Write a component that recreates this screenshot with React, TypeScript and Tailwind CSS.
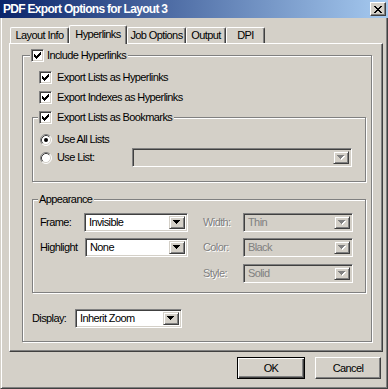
import React from "react";

const sunken =
  "border-t border-l border-t-[#808080] border-l-[#808080] border-b border-r border-b-white border-r-white shadow-[inset_1px_1px_0_#404040,inset_-1px_-1px_0_#d4d0c8]";
const raisedBtn =
  "border-t border-l border-t-white border-l-white border-b border-r border-b-[#404040] border-r-[#404040] shadow-[inset_-1px_-1px_0_#808080]";
const raisedArrow =
  "border-t border-l border-t-[#d4d0c8] border-l-[#d4d0c8] border-b border-r border-b-[#404040] border-r-[#404040] shadow-[inset_1px_1px_0_#fff,inset_-1px_-1px_0_#808080]";
const etched = "border border-[#808080] shadow-[inset_1px_1px_0_#fff,1px_1px_0_#fff]";

function Check() {
  return (
    <span className={`w-[13px] h-[13px] shrink-0 bg-white flex items-center justify-center ${sunken}`}>
      <svg width="7" height="7" viewBox="0 0 7 7" shapeRendering="crispEdges">
        <path
          d="M6 0h1v3h-1v1h-1v1h-1v1h-1v1h-1v-1h-1v-1h-1v-3h1v1h1v1h1v-1h1v-1h1z"
          fill="#000"
        />
      </svg>
    </span>
  );
}

function Radio({ on }: { on?: boolean }) {
  return (
    <svg width="12" height="12" viewBox="0 0 12 12" className="shrink-0">
      <circle cx="6" cy="6" r="5" fill="#fff" />
      <path d="M9.89 2.11 A5.5 5.5 0 0 0 2.11 9.89" stroke="#808080" fill="none" strokeWidth="1" />
      <path d="M2.11 9.89 A5.5 5.5 0 0 0 9.89 2.11" stroke="#fff" fill="none" strokeWidth="1" />
      <path d="M9.18 2.82 A4.5 4.5 0 0 0 2.82 9.18" stroke="#404040" fill="none" strokeWidth="1" />
      <path d="M2.82 9.18 A4.5 4.5 0 0 0 9.18 2.82" stroke="#d4d0c8" fill="none" strokeWidth="1" />
      {on && <circle cx="6" cy="6" r="2" fill="#000" />}
    </svg>
  );
}

function Arrow({ disabled }: { disabled?: boolean }) {
  const d = "M0 0H7V1H6V2H5V3H4V4H3V3H2V2H1V1H0Z";
  return (
    <span className={`w-[16px] h-full shrink-0 bg-[#d4d0c8] flex items-center justify-center ${raisedArrow}`}>
      <svg width="8" height="5" viewBox="0 0 8 5" shapeRendering="crispEdges">
        {disabled && <path d={d} fill="#fff" transform="translate(1,1)" />}
        <path d={d} fill={disabled ? "#808080" : "#000"} />
      </svg>
    </span>
  );
}

function Combo({ value, w, disabled }: { value: string; w: string; disabled?: boolean }) {
  return (
    <div className={`${w} h-[19px] shrink-0 flex p-[2px] ${sunken} ${disabled ? "bg-[#d4d0c8]" : "bg-white"}`}>
      <span className={`flex-1 pl-[2px] leading-[13px] ${disabled ? "text-[#808080]" : "text-black"}`}>{value}</span>
      <Arrow disabled={disabled} />
    </div>
  );
}

function Tab({ label, w, active }: { label: string; w: string; active?: boolean }) {
  return (
    <div
      className={`${w} shrink-0 flex items-center justify-center bg-[#d4d0c8] rounded-tl-[2px] rounded-tr-[2px] border-t border-l border-t-white border-l-white border-r border-r-[#404040] shadow-[inset_-1px_0_0_#808080] ${
        active ? "h-[19px] -mb-[1px] relative z-10 pb-[2px]" : "h-[16px]"
      }`}
    >
      {label}
    </div>
  );
}

export default function App() {
  return (
    <div className="w-[388px] h-[389px] bg-[#d4d0c8] flex flex-col font-['Liberation_Sans',Arial,sans-serif] text-[11px] tracking-[-0.6px] text-black overflow-hidden select-none">
      {/* Title bar */}
      <div className="h-[18px] shrink-0 flex items-center bg-[linear-gradient(to_right,#0a246a,#a6caf0)] pl-[3px] pr-[2px]">
        <span className="flex-1 text-white font-bold text-[12px] tracking-[-0.7px] leading-none">
          PDF Export Options for Layout 3
        </span>
        <span className={`w-[16px] h-[14px] bg-[#d4d0c8] flex items-center justify-center ${raisedBtn}`}>
          <svg width="8" height="7" viewBox="0 0 8 7" shapeRendering="crispEdges">
            <path
              d="M0 0h2v1h-2z M6 0h2v1h-2z M1 1h2v1h-2z M5 1h2v1h-2z M2 2h4v1h-4z M3 3h2v1h-2z M2 4h4v1h-4z M1 5h2v1h-2z M5 5h2v1h-2z M0 6h2v1h-2z M6 6h2v1h-2z"
              fill="#000"
            />
          </svg>
        </span>
      </div>

      {/* Body */}
      <div className="flex-1 flex flex-col border-l border-l-[#d4d0c8] border-r border-r-[#404040] border-b border-b-[#404040] shadow-[inset_1px_0_0_#fff,inset_-1px_-1px_0_#808080] pt-[7px] pl-[8px]">
        {/* Tabs */}
        <div className="h-[18px] flex items-end pl-[1px]">
          <Tab label="Layout Info" w="w-[59px]" />
          <Tab label="Hyperlinks" w="w-[58px]" active />
          <Tab label="Job Options" w="w-[59px]" />
          <Tab label="Output" w="w-[40px]" />
          <Tab label="DPI" w="w-[39px]" />
        </div>

        {/* Panel */}
        <div className="w-[374px] h-[309px] flex flex-col items-start border-t border-l border-t-white border-l-white border-r border-b border-r-[#404040] border-b-[#404040] shadow-[inset_-1px_-1px_0_#808080]">
          <fieldset className={`ml-[12px] mt-[5px] w-[350px] h-[293px] flex flex-col items-start ${etched}`}>
            <legend className="ml-[7px] pl-[1px] pr-[2px] bg-[#d4d0c8] flex items-center gap-[3px] h-[13px]">
              <Check />
              <span className="leading-[13px]">Include Hyperlinks</span>
            </legend>

            <div className="mt-[9px] ml-[16px] flex items-center gap-[5px] h-[13px]">
              <Check />
              <span>Export Lists as Hyperlinks</span>
            </div>
            <div className="mt-[7px] ml-[16px] flex items-center gap-[5px] h-[13px]">
              <Check />
              <span>Export Indexes as Hyperlinks</span>
            </div>

            <fieldset className={`mt-[7px] ml-[9px] w-[334px] h-[71px] flex flex-col items-start ${etched}`}>
              <legend className="ml-[5px] pl-[1px] pr-[2px] bg-[#d4d0c8] flex items-center gap-[5px] h-[13px]">
                <Check />
                <span className="leading-[13px]">Export Lists as Bookmarks</span>
              </legend>
              <div className="mt-[9px] ml-[7px] flex items-center gap-[5px] h-[13px]">
                <Radio on />
                <span>Use All Lists</span>
              </div>
              <div className="mt-[2px] ml-[7px] flex items-center h-[19px]">
                <Radio />
                <span className="ml-[5px] w-[75px]">Use List:</span>
                <Combo value="" w="w-[220px]" disabled />
              </div>
            </fieldset>

            <fieldset className={`mt-[11px] ml-[9px] w-[334px] h-[100px] flex flex-col items-start ${etched}`}>
              <legend className="ml-[5px] pl-[1px] pr-[2px] bg-[#d4d0c8] h-[13px] leading-[13px]">Appearance</legend>
              <div className="mt-[7px] ml-[7px] flex">
                <div className="flex flex-col gap-[6px] w-[148px]">
                  <div className="flex items-center h-[19px]">
                    <span className="w-[45px]">Frame:</span>
                    <Combo value="Invisible" w="w-[104px]" />
                  </div>
                  <div className="flex items-center h-[19px]">
                    <span className="w-[45px]">Highlight</span>
                    <Combo value="None" w="w-[103px]" />
                  </div>
                </div>
                <div className="ml-[15px] flex flex-col gap-[6px]">
                  <div className="flex items-center h-[19px]">
                    <span className="w-[40px] text-[#808080] [text-shadow:1px_1px_0_#fff]">Width:</span>
                    <Combo value="Thin" w="w-[110px]" disabled />
                  </div>
                  <div className="flex items-center h-[19px]">
                    <span className="w-[40px] text-[#808080] [text-shadow:1px_1px_0_#fff]">Color:</span>
                    <Combo value="Black" w="w-[110px]" disabled />
                  </div>
                  <div className="flex items-center h-[19px] mt-[1px]">
                    <span className="w-[40px] text-[#808080] [text-shadow:1px_1px_0_#fff]">Style:</span>
                    <Combo value="Solid" w="w-[110px]" disabled />
                  </div>
                </div>
              </div>
            </fieldset>

            <div className="mt-[16px] ml-[9px] flex items-center h-[19px]">
              <span className="w-[43px]">Display:</span>
              <Combo value="Inherit Zoom" w="w-[107px]" />
            </div>
          </fieldset>
        </div>

        {/* Buttons */}
        <div className="mt-[5px] flex">
          <button className="ml-[228px] w-[68px] h-[22px] bg-[#d4d0c8] border border-black shadow-[inset_1px_1px_0_#fff,inset_-1px_-1px_0_#404040,inset_-2px_-2px_0_#808080] flex items-center justify-center">
            OK
          </button>
          <button className={`ml-[10px] w-[66px] h-[22px] bg-[#d4d0c8] flex items-center justify-center ${raisedBtn}`}>
            Cancel
          </button>
        </div>
      </div>
    </div>
  );
}
